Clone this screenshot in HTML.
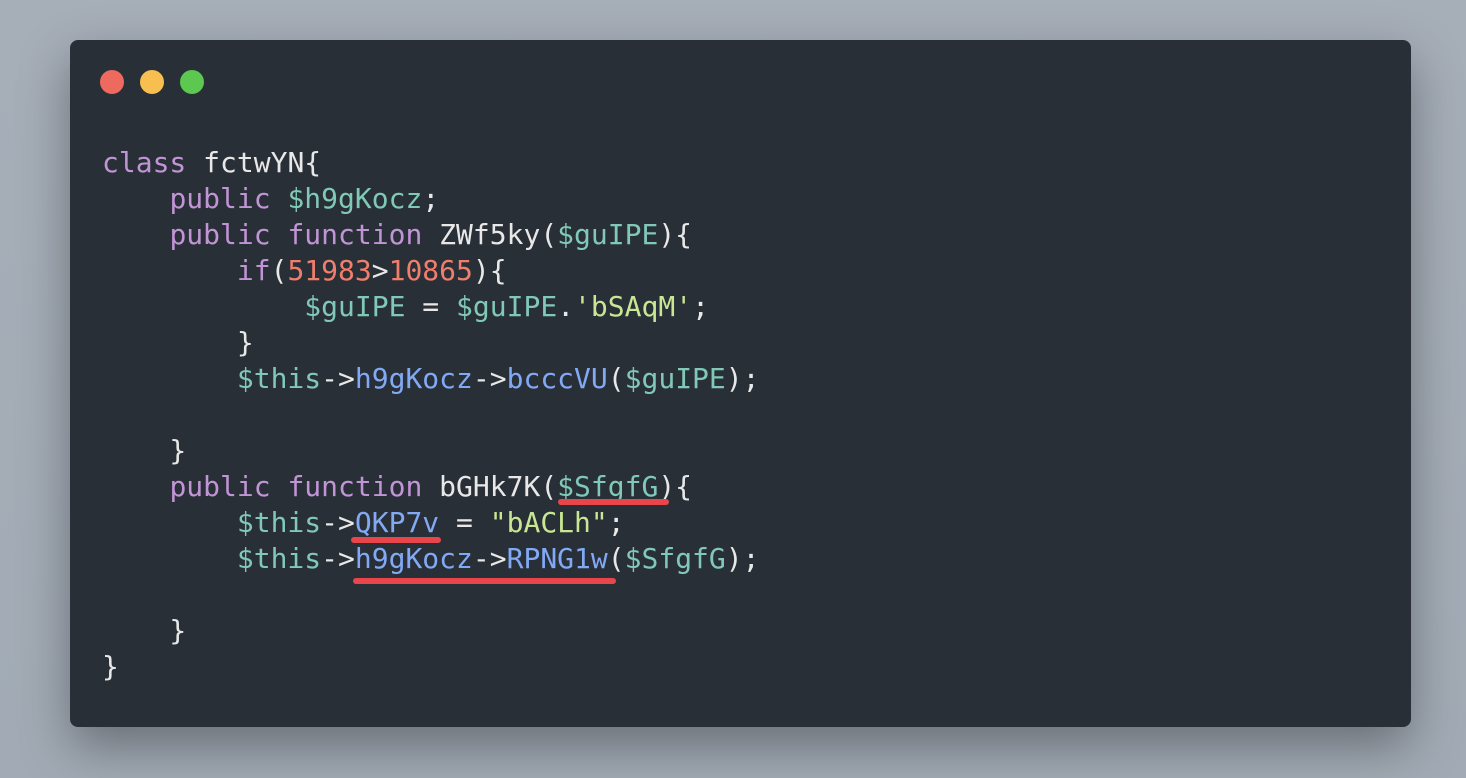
<!DOCTYPE html>
<html><head><style>
html,body{margin:0;padding:0}
body{width:1466px;height:778px;background:linear-gradient(180deg,#a6aeb8,#a2abb5);position:relative;overflow:hidden}
.win{position:absolute;left:70px;top:40px;width:1341px;height:687px;background:#292f37;border-radius:8px;box-shadow:0 20px 50px rgba(0,0,0,.35)}
.dot{position:absolute;top:70px;width:24px;height:24px;border-radius:50%}
pre{position:absolute;left:102px;top:145px;margin:0;font-family:"DejaVu Sans Mono","Liberation Mono",monospace;font-size:28px;line-height:36px;color:#e8e8e8}
.k{color:#c194d6}.v{color:#80c8b8}.f{color:#82a9f4}.n{color:#f07e6c}.s{color:#c8e694}
.u{position:absolute;height:6px;background:#e8464a;border-radius:3px}
</style></head><body>
<div class="win"></div>
<div class="dot" style="left:100px;background:#ef6a5e"></div>
<div class="dot" style="left:140px;background:#f6bf4f"></div>
<div class="dot" style="left:180px;background:#5dc84f"></div>
<pre><span class="k">class</span> fctwYN{
    <span class="k">public</span> <span class="v">$h9gKocz</span>;
    <span class="k">public</span> <span class="k">function</span> ZWf5ky(<span class="v">$guIPE</span>){
        <span class="k">if</span>(<span class="n">51983</span>&gt;<span class="n">10865</span>){
            <span class="v">$guIPE</span> = <span class="v">$guIPE</span>.<span class="s">'bSAqM'</span>;
        }
        <span class="v">$this</span>-&gt;<span class="f">h9gKocz</span>-&gt;<span class="f">bcccVU</span>(<span class="v">$guIPE</span>);

    }
    <span class="k">public</span> <span class="k">function</span> bGHk7K(<span class="v">$SfgfG</span>){
        <span class="v">$this</span>-&gt;<span class="f">QKP7v</span> = <span class="s">"bACLh"</span>;
        <span class="v">$this</span>-&gt;<span class="f">h9gKocz</span>-&gt;<span class="f">RPNG1w</span>(<span class="v">$SfgfG</span>);

    }
}</pre>
<div class="u" style="left:558px;top:499px;width:111px"></div>
<div class="u" style="left:351px;top:537px;width:90px"></div>
<div class="u" style="left:353px;top:578px;width:263px"></div>
</body></html>
